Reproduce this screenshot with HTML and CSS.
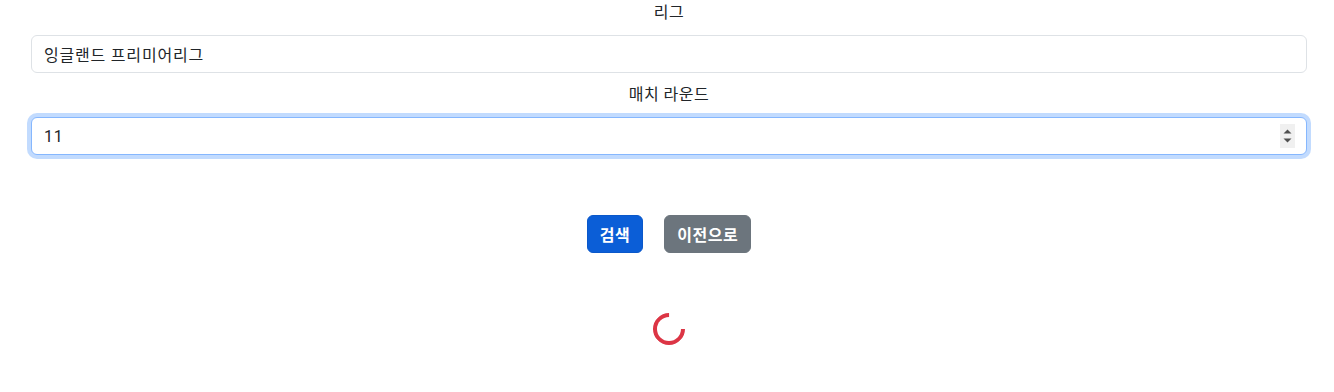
FILE: index.html
```html
<!DOCTYPE html>
<html lang="ko">
<head>
    <meta charset="UTF-8">
    <meta name="viewport" content="width=device-width, initial-scale=1.0">
    <title>매치 검색</title>
    <link rel="stylesheet" href="styles.css">
</head>
<body>

    <!-- Search form -->
    <form class="search-form">
        <div class="form-group">
            <label class="form-label" for="league">리그</label>
            <input type="text" id="league" class="form-control" value="잉글랜드 프리미어리그">
        </div>
        <div class="form-group">
            <label class="form-label" for="round">매치 라운드</label>
            <div class="number-wrap">
                <input type="number" id="round" class="form-control focused" value="11">
                <span class="spin-box">
                    <svg width="9" height="16" viewBox="0 0 9 16">
                        <path d="M0.5 5.5 L4.5 1.5 L8.5 5.5 Z" fill="#505050"/>
                        <path d="M0.5 10.5 L4.5 14.5 L8.5 10.5 Z" fill="#505050"/>
                    </svg>
                </span>
            </div>
        </div>

        <div class="button-row">
            <button type="button" class="btn btn-primary">검색</button>
            <button type="button" class="btn btn-secondary">이전으로</button>
        </div>
    </form>

    <!-- Loading -->
    <div class="loading">
        <div class="spinner"></div>
    </div>

</body>
</html>
```

FILE: styles.css
```css
body {
    font-family: Roboto, "Noto Sans CJK KR", sans-serif;
    font-size: 16px;
    color: #212529;
    margin: 0;
    padding: 0 27px 0 31px;
    background-color: #fff;
}

.form-group {
    display: flex;
    flex-direction: column;
}

.form-label {
    display: block;
    text-align: center;
    line-height: 26px;
    margin-bottom: 9px;
    letter-spacing: 0.5px;
}

.form-control {
    display: block;
    box-sizing: border-box;
    width: 100%;
    height: 38px;
    padding: 6px 12px;
    font-family: inherit;
    font-size: 16px;
    letter-spacing: 0.8px;
    color: #212529;
    background-color: #fff;
    border: 1px solid #dee2e6;
    border-radius: 6px;
    margin-bottom: 9px;
    outline: none;
}

.form-control.focused,
.form-control:focus {
    border-color: #86b7fe;
    box-shadow: 0 0 0 4px rgba(13, 110, 253, 0.25);
}

/* number input with windows-like spin box */
.number-wrap {
    position: relative;
}

.number-wrap input::-webkit-inner-spin-button,
.number-wrap input::-webkit-outer-spin-button {
    -webkit-appearance: none;
    margin: 0;
}

.spin-box {
    position: absolute;
    top: 7px;
    right: 12px;
    width: 15px;
    height: 24px;
    background-color: #f0f0f0;
    display: flex;
    align-items: center;
    justify-content: center;
}

.button-row {
    display: flex;
    justify-content: center;
    gap: 21px;
    margin-top: 51px;
}

.btn {
    box-sizing: border-box;
    height: 38px;
    padding: 0 12px;
    font-family: inherit;
    font-size: 16px;
    font-weight: 600;
    letter-spacing: 0.5px;
    color: #fff;
    border: 1px solid transparent;
    border-radius: 6px;
    cursor: pointer;
}

.btn-primary {
    background-color: #0b5ed7;
    border-color: #0a58ca;
}

.btn-secondary {
    background-color: #6c757d;
    border-color: #6c757d;
}

.loading {
    display: flex;
    justify-content: center;
    margin-top: 60px;
}

.spinner {
    width: 32px;
    height: 32px;
    box-sizing: border-box;
    border: 4px solid #dc3545;
    border-right-color: transparent;
    border-radius: 50%;
    transform: rotate(-45deg);
}
```
